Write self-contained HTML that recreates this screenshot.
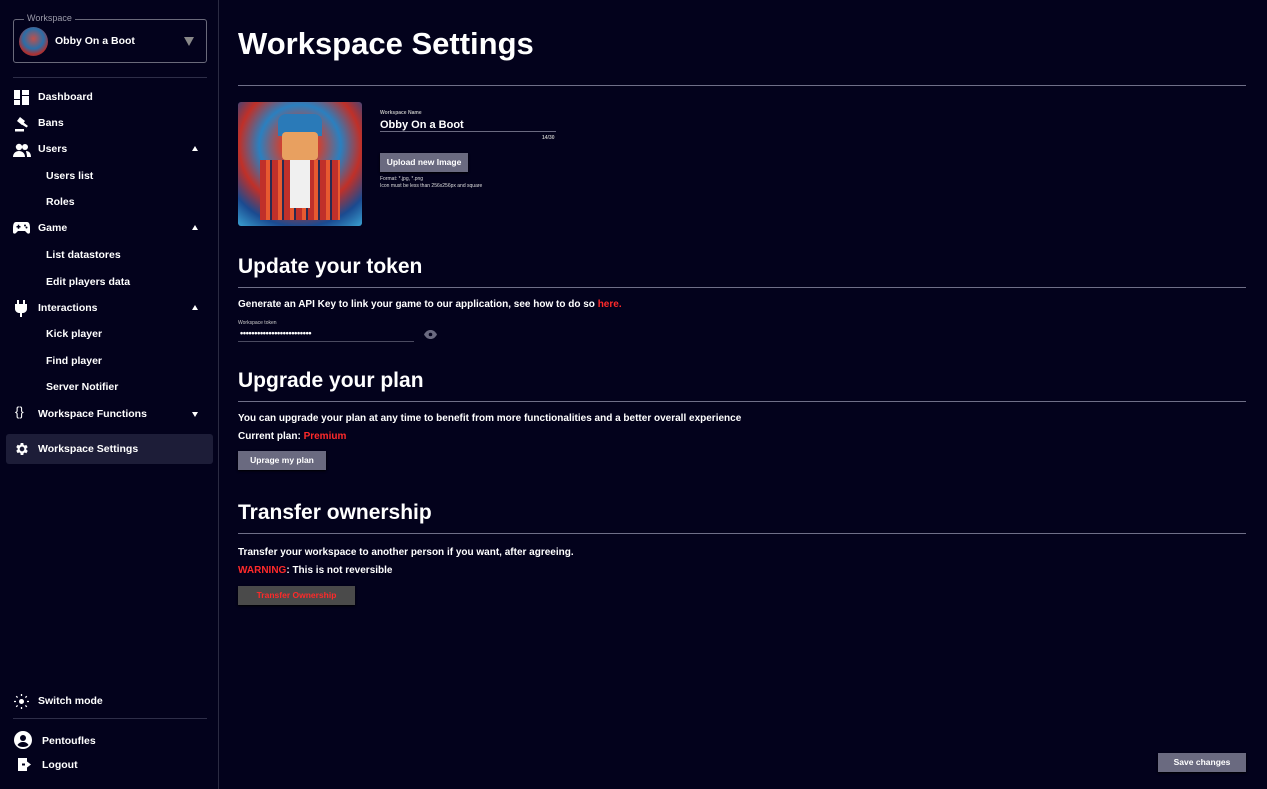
<!DOCTYPE html>
<html><head><meta charset="utf-8"><style>
*{margin:0;padding:0;box-sizing:border-box}
body{width:1267px;height:789px;background:#03021c;color:#fff;font-family:"Liberation Sans",sans-serif;font-weight:bold;position:relative;overflow:hidden}
.a{position:absolute;white-space:nowrap}
.side{position:absolute;left:0;top:0;width:219px;height:789px;border-right:1px solid #2b2b42}
.nav{font-size:10.5px;line-height:12px}
.hr{position:absolute;height:1px;background:#6f6f88}
.btn{position:absolute;background:#6a6a80;color:#fff;font-size:8.5px;text-align:center;box-shadow:0 1px 2px #000}
.red{color:#ff2a2a}
svg.i{position:absolute}
</style></head><body>
<div class="side">
 <div class="a" style="left:13px;top:19px;width:194px;height:44px;border:1px solid #6a6a7a;border-radius:3px"></div>
 <div class="a" style="left:24px;top:13px;font-size:9px;color:#9a9aa8;background:#03021c;padding:0 3px;font-weight:normal">Workspace</div>
 <div class="a" style="left:19px;top:27px;width:29px;height:29px;border-radius:50%;background:radial-gradient(circle at 50% 40%,#c0504a 0,#2a6ea8 45%,#b03030 70%,#1a3c70 100%)"></div>
 <div class="a" style="left:55px;top:35px;font-size:10.5px">Obby On a Boot</div>
 <div class="a" style="left:184px;top:37px;width:0;height:0;border-left:5px solid transparent;border-right:5px solid transparent;border-top:9px solid #888"></div>
 <div class="hr" style="left:13px;top:77px;width:194px;background:#2e2e48"></div>

 <svg class="i" style="left:14px;top:90px" width="15" height="15" viewBox="0 0 15 15" fill="#fff"><rect x="0" y="0" width="6" height="9"/><rect x="0" y="10" width="6" height="5"/><rect x="8" y="0" width="7" height="5"/><rect x="8" y="6" width="7" height="9"/></svg>
 <div class="a nav" style="left:38px;top:91px">Dashboard</div>
 <svg class="i" style="left:14px;top:116px" width="16" height="16" viewBox="0 0 16 16" fill="#fff"><path d="M6 1l5 4-3 4-5-4z"/><path d="M9 6l5 4-1.5 1.5L7 8z"/><rect x="1" y="13" width="9" height="2.5"/></svg>
 <div class="a nav" style="left:38px;top:117px">Bans</div>
 <svg class="i" style="left:13px;top:143px" width="18" height="15" viewBox="0 0 18 15" fill="#fff"><circle cx="6" cy="4" r="3.2"/><path d="M0 14c0-4 3-6 6-6s6 2 6 6z"/><circle cx="12" cy="4" r="3" /><path d="M13 8c3 0 5 2 5 6h-4c0-3-1-5-1-6z"/></svg>
 <div class="a nav" style="left:38px;top:143px">Users</div>
 <div class="a" style="left:192px;top:146px;border-left:3px solid transparent;border-right:3px solid transparent;border-bottom:5px solid #fff"></div>
 <div class="a nav" style="left:46px;top:170px">Users list</div>
 <div class="a nav" style="left:46px;top:196px">Roles</div>
 <svg class="i" style="left:13px;top:222px" width="17" height="12" viewBox="0 0 17 12" fill="#fff"><path d="M3 0h11c2 0 3 2 3 6v4c0 2-2 2-3 1l-2-2H5l-2 2c-1 1-3 1-3-1V6c0-4 1-6 3-6z"/><rect x="3.5" y="4" width="4" height="1.5" fill="#03021c"/><rect x="4.75" y="2.75" width="1.5" height="4" fill="#03021c"/><circle cx="12" cy="3.5" r="1" fill="#03021c"/><circle cx="13.5" cy="5.5" r="1" fill="#03021c"/></svg>
 <div class="a nav" style="left:38px;top:222px">Game</div>
 <div class="a" style="left:192px;top:225px;border-left:3px solid transparent;border-right:3px solid transparent;border-bottom:5px solid #fff"></div>
 <div class="a nav" style="left:46px;top:249px">List datastores</div>
 <div class="a nav" style="left:46px;top:276px">Edit players data</div>
 <svg class="i" style="left:15px;top:300px" width="12" height="17" viewBox="0 0 12 17" fill="#fff"><rect x="2" y="0" width="2" height="4"/><rect x="8" y="0" width="2" height="4"/><path d="M0 4h12v5c0 2-2 4-4 4H4c-2 0-4-2-4-4z"/><rect x="5" y="12" width="2" height="5"/></svg>
 <div class="a nav" style="left:38px;top:302px">Interactions</div>
 <div class="a" style="left:192px;top:305px;border-left:3px solid transparent;border-right:3px solid transparent;border-bottom:5px solid #fff"></div>
 <div class="a nav" style="left:46px;top:328px">Kick player</div>
 <div class="a nav" style="left:46px;top:355px">Find player</div>
 <div class="a nav" style="left:46px;top:381px">Server Notifier</div>
 <div class="a" style="left:15px;top:404px;font-size:13px;font-weight:normal">{}</div>
 <div class="a nav" style="left:38px;top:408px">Workspace Functions</div>
 <div class="a" style="left:192px;top:412px;border-left:3px solid transparent;border-right:3px solid transparent;border-top:5px solid #fff"></div>
 <div class="a" style="left:6px;top:434px;width:207px;height:30px;background:#1d1d38;border-radius:3px"></div>
 <svg class="i" style="left:14px;top:441px" width="16" height="16" viewBox="0 0 24 24" fill="#fff"><path d="M19.4 13a7.5 7.5 0 000-2l2.1-1.6-2-3.5-2.5 1a7 7 0 00-1.7-1L15 3h-4l-.4 2.7a7 7 0 00-1.7 1l-2.5-1-2 3.5L6.5 11a7.5 7.5 0 000 2l-2.1 1.6 2 3.5 2.5-1a7 7 0 001.7 1L11 21h4l.4-2.7a7 7 0 001.7-1l2.5 1 2-3.5zM13 15.5a3.5 3.5 0 110-7 3.5 3.5 0 010 7z" transform="translate(-1 0)"/></svg>
 <div class="a nav" style="left:38px;top:443px">Workspace Settings</div>

 <svg class="i" style="left:14px;top:694px" width="15" height="15" viewBox="0 0 15 15" fill="#fff"><circle cx="7.5" cy="7.5" r="2.5"/><g stroke="#fff" stroke-width="1.3"><path d="M7.5 0v2M7.5 13v2M0 7.5h2M13 7.5h2M2.2 2.2l1.4 1.4M11.4 11.4l1.4 1.4M2.2 12.8l1.4-1.4M11.4 3.6l1.4-1.4"/></g></svg>
 <div class="a nav" style="left:38px;top:695px">Switch mode</div>
 <div class="hr" style="left:13px;top:718px;width:194px;background:#2e2e48"></div>
 <svg class="i" style="left:14px;top:731px" width="18" height="18" viewBox="0 0 18 18"><circle cx="9" cy="9" r="9" fill="#fff"/><circle cx="9" cy="7" r="3" fill="#03021c"/><path d="M3.5 14c1.5-2.5 3.5-3 5.5-3s4 .5 5.5 3c-1.5 1.5-3.5 2-5.5 2s-4-.5-5.5-2z" fill="#03021c"/></svg>
 <div class="a nav" style="left:42px;top:735px">Pentoufles</div>
 <svg class="i" style="left:18px;top:758px" width="14" height="13" viewBox="0 0 14 13" fill="#fff"><rect x="0" y="0" width="9" height="13"/><rect x="4" y="5.5" width="7" height="2" fill="#03021c"/><path d="M9 3.5l4 3-4 3z"/><rect x="7" y="5.5" width="4" height="2"/></svg>
 <div class="a nav" style="left:42px;top:759px">Logout</div>
</div>

<div class="a" style="left:238px;top:26px;font-size:31px">Workspace Settings</div>
<div class="hr" style="left:238px;top:85px;width:1008px"></div>

<div class="a" style="left:238px;top:102px;width:124px;height:124px;border-radius:3px;background:radial-gradient(circle at 50% 35%,#f0a070 0,#d04030 18%,#2a80c0 40%,#c03028 60%,#1a4a90 80%,#3aa0d0 100%);overflow:hidden">
 <div style="position:absolute;left:40px;top:12px;width:44px;height:22px;background:#2a7ab8;border-radius:8px 8px 0 0"></div>
 <div style="position:absolute;left:44px;top:30px;width:36px;height:28px;background:#e8a060;border-radius:4px"></div>
 <div style="position:absolute;left:22px;top:58px;width:80px;height:60px;background:repeating-linear-gradient(90deg,#c0302a 0 6px,#e85a30 6px 10px,#2a2a50 10px 12px)"></div>
 <div style="position:absolute;left:52px;top:58px;width:20px;height:48px;background:#f0f0f0"></div>
</div>
<div class="a" style="left:380px;top:110px;font-size:5px;color:#bbb">Workspace Name</div>
<div class="a" style="left:380px;top:119px;font-size:11px">Obby On a Boot</div>
<div class="hr" style="left:380px;top:131px;width:176px;background:#6a6a80"></div>
<div class="a" style="left:542px;top:135px;font-size:5px;color:#bbb">14/30</div>
<div class="btn" style="left:380px;top:153px;width:88px;height:19px;line-height:19px">Upload new Image</div>
<div class="a" style="left:380px;top:176px;font-size:5px;color:#ddd;font-weight:normal;line-height:7px">Format: *.jpg, *.png<br>Icon must be less than 256x256px and square</div>

<div class="a" style="left:238px;top:255px;font-size:21px">Update your token</div>
<div class="hr" style="left:238px;top:287px;width:1008px"></div>
<div class="a" style="left:238px;top:299px;font-size:10px">Generate an API Key to link your game to our application, see how to do so <span class="red">here.</span></div>
<div class="a" style="left:238px;top:320px;font-size:5px;color:#ccc;font-weight:normal">Workspace token</div>
<div class="a" style="left:240px;top:328px;font-size:9px;letter-spacing:-0.3px">•••••••••••••••••••••••••</div>
<div class="hr" style="left:238px;top:341px;width:176px;background:#4a4a60"></div>
<svg class="i" style="left:424px;top:330px" width="13" height="9" viewBox="0 0 13 9"><path d="M0 4.5C2 1 4 0 6.5 0S11 1 13 4.5C11 8 9 9 6.5 9S2 8 0 4.5z" fill="#6a6a80"/><circle cx="6.5" cy="4.5" r="1.8" fill="#03021c"/></svg>

<div class="a" style="left:238px;top:369px;font-size:21px">Upgrade your plan</div>
<div class="hr" style="left:238px;top:401px;width:1008px"></div>
<div class="a" style="left:238px;top:413px;font-size:10px">You can upgrade your plan at any time to benefit from more functionalities and a better overall experience</div>
<div class="a" style="left:238px;top:431px;font-size:10px">Current plan: <span class="red">Premium</span></div>
<div class="btn" style="left:238px;top:451px;width:88px;height:19px;line-height:19px">Uprage my plan</div>

<div class="a" style="left:238px;top:501px;font-size:21px">Transfer ownership</div>
<div class="hr" style="left:238px;top:533px;width:1008px"></div>
<div class="a" style="left:238px;top:547px;font-size:10px">Transfer your workspace to another person if you want, after agreeing.</div>
<div class="a" style="left:238px;top:565px;font-size:10px"><span class="red">WARNING</span>: This is not reversible</div>
<div class="btn" style="left:238px;top:586px;width:117px;height:19px;line-height:19px;background:#4a4a4a;color:#ff2a2a">Transfer Ownership</div>

<div class="btn" style="left:1158px;top:753px;width:88px;height:19px;line-height:19px">Save changes</div>
</body></html>
